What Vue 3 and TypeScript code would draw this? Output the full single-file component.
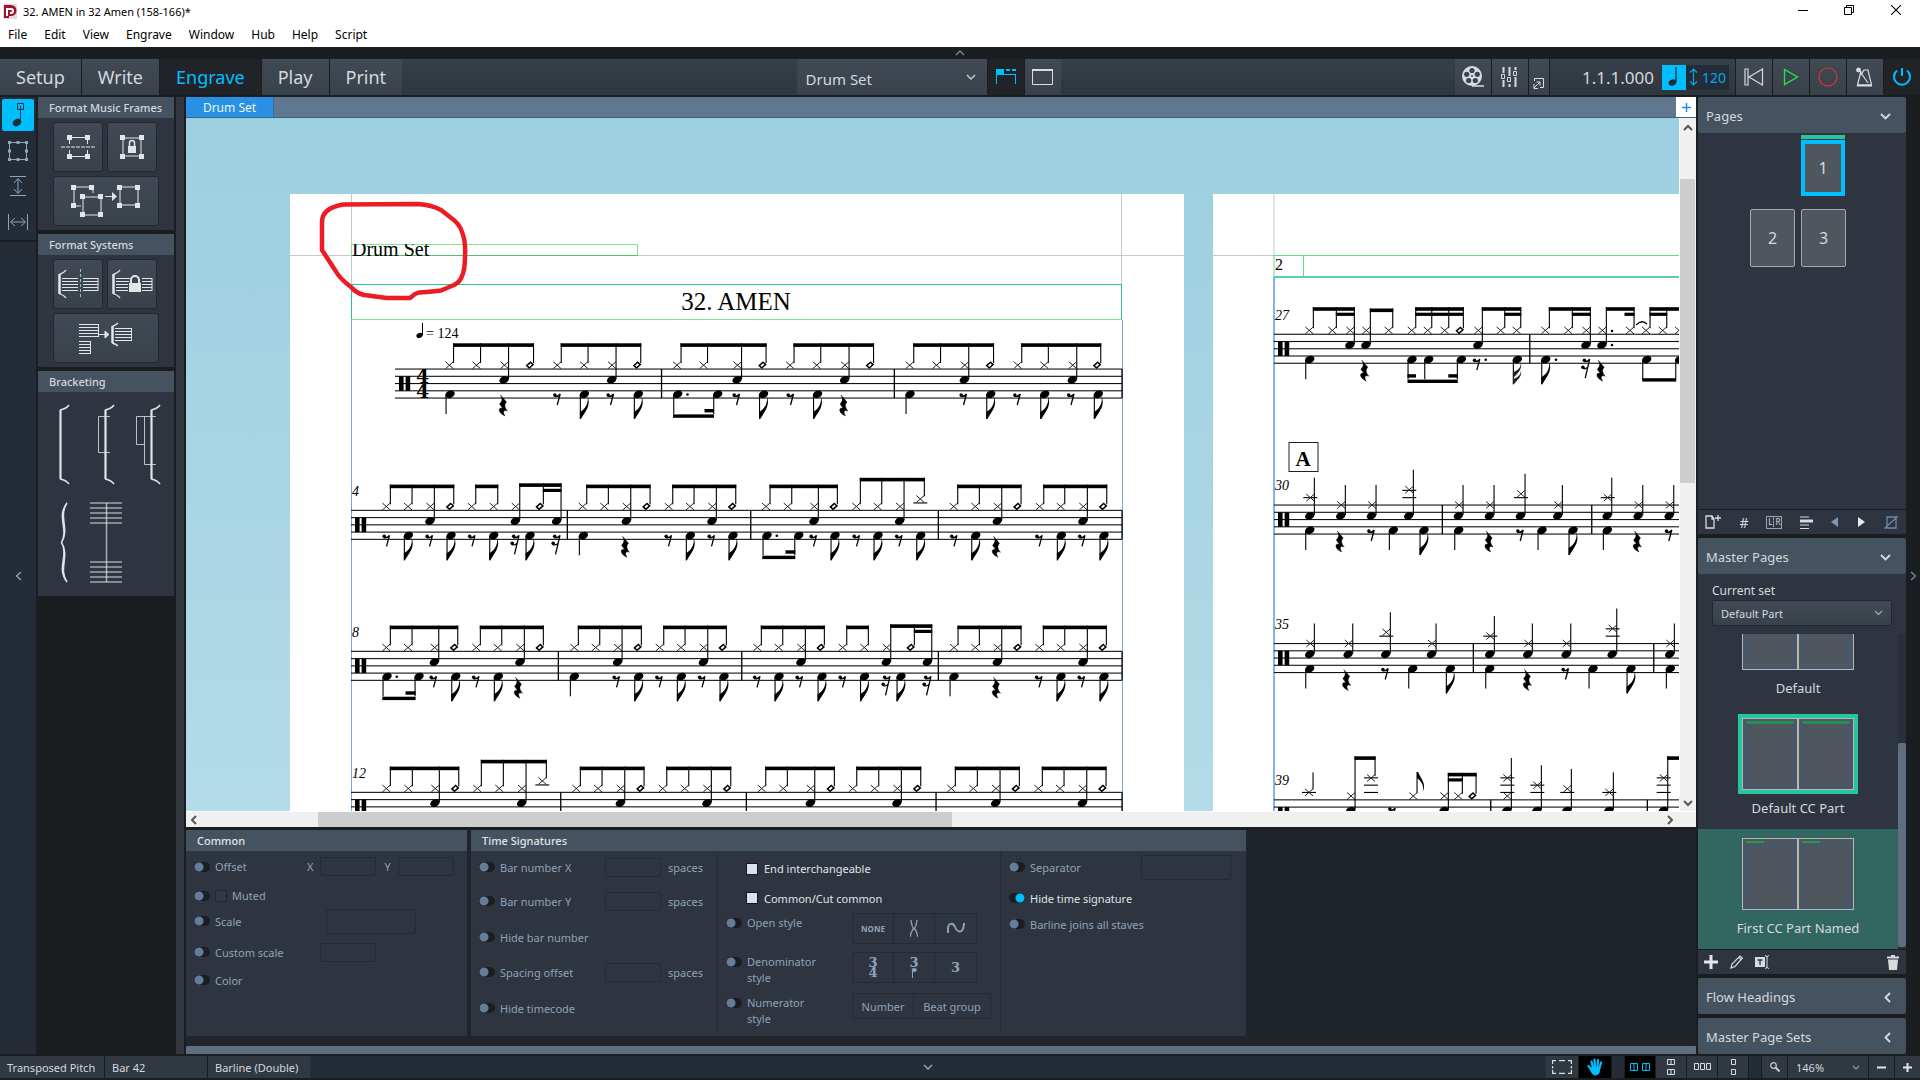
<script setup lang="ts">
import { ref } from 'vue'

interface Seg { x: number; y: number; w: number; h: number }
interface Glyph { id: string; x: number; y: number }
interface UpGroup { notes: string; beam?: number; second?: [number, number][] }
interface StaffSystem {
  x: number
  end: number
  top: number
  label?: string
  labelY?: number
  bars: number[]
  clefX: number
  up: UpGroup[]
  down: string
  downBeams?: [number, number, number][]
  singles?: [number, number, boolean][]
}

const modes = ['Setup', 'Write', 'Engrave', 'Play', 'Print']
const menus = ['File', 'Edit', 'View', 'Engrave', 'Window', 'Hub', 'Help', 'Script']
const activeMode = ref('Engrave')

const SPACE = 7.25

/* Upstem tokens: x = cymbal, s = cymbal + snare, o = open hi-hat, n = snare only, h = crash on a ledger line, c = high crash */
const systems: StaffSystem[] = [
  {
    x: 395, end: 1122, top: 369, bars: [661.5, 894.3, 1122], clefX: 399,
    up: [
      { notes: '453.5x 480.5x 508.5s 533.5o' }, { notes: '561.2x 588x 616s 640.7o' },
      { notes: '681x 707.5x 741.5s 766o' }, { notes: '794x 820.7x 849s 873.5o' },
      { notes: '913.7x 940.5x 968.7s 993.5o' }, { notes: '1021.7x 1048.3x 1076.7s 1100.7o' },
    ],
    down: '450q 503R 556.7r 584.3e 610r 638.3e 677.7d 717.7b 736r 763.5e 790r 817.5e 843.5R 910q 963r 990.7e 1016.7r 1044.7e 1070.5r 1098.3e',
    downBeams: [[673, 714, 45.4], [704.5, 714, 40]],
  },
  {
    x: 351, end: 1122, top: 510.3, label: '4', labelY: 496, bars: [567.3, 750.7, 938.3, 1122], clefX: 355,
    up: [
      { notes: '390.3x 412x 434.3s 453.7o' }, { notes: '475.7x 497.7x' },
      { notes: '519.7s 543.3o 561n', beam: -27, second: [[543.3, 561]] },
      { notes: '586.7x 608.3x 630.7s 650o' }, { notes: '672.7x 694x 716.3s 735.7o' },
      { notes: '770x 791.7x 818.3s 837.3o' }, { notes: '860.3x 881.7x 904s 924.3h', beam: -32.5 },
      { notes: '957.7x 979.3x 1001.7s 1021o' }, { notes: '1043.7x 1064.7x 1087.3s 1106.7o' },
    ],
    down: '386r 408.3e 429r 451e 471.5r 493.7e 515S 530e 556S 583.3q 625R 668r 690.3e 711r 733e 767d 798.7b 813r 835e 856r 878e 898.5r 920.7e 953.5r 975.7e 996R 1038.7r 1061.3e 1081.5r 1104e',
    downBeams: [[762.3, 795.3, 45.4], [785.5, 795.3, 40]],
  },
  {
    x: 351, end: 1122, top: 651.3, label: '8', labelY: 637, bars: [558.3, 741.7, 938.3, 1122], clefX: 355,
    up: [
      { notes: '390.3x 412x 438.7s 457.7o' }, { notes: '480.3x 501.7x 524.3s 543.3o' },
      { notes: '578.3x 599.7x 622s 641.3o' }, { notes: '663.7x 685x 707.7s 726.3o' },
      { notes: '761.3x 782.7x 805.3s 824.3o' }, { notes: '846.7x 868.3x' },
      { notes: '890.7s 914.3o 931.7n', beam: -27, second: [[914.3, 931.7]] },
      { notes: '958x 979.3x 1001.7s 1021o' }, { notes: '1043.3x 1064.7x 1087.3s 1106.3o' },
    ],
    down: '387d 419b 433r 455.7e 475.5r 498.3e 518R 574.3q 616r 638.7e 658.7r 681.3e 701.5r 724e 756.5r 779e 799r 822e 842r 864.5e 886S 901e 927S 954q 996R 1038.5r 1061e 1081r 1104e',
    downBeams: [[382.3, 415.6, 45.4], [405.5, 415.6, 40]],
  },
  {
    x: 351, end: 1122, top: 792.3, label: '12', labelY: 778, bars: [560.7, 746.3, 936, 1122], clefX: 355,
    up: [
      { notes: '390.3x 412.3x 439.3s 458.7o' }, { notes: '481.3x 503.3x 526s 546.3h', beam: -32.5 },
      { notes: '580.3x 602x 624.7s 644o' }, { notes: '666.7x 688.7x 711.3s 730.7o' },
      { notes: '765.7x 787.3x 814.7s 834.3o' }, { notes: '856.7x 878.7x 901.3s 920.7o' },
      { notes: '955.3x 977.3x 1000s 1019.3o' }, { notes: '1042.3x 1064x 1086.7s 1106o' },
    ],
    down: '',
  },
  {
    x: 1274, end: 1920, top: 334.2, label: '27', labelY: 320, bars: [1529.7], clefX: 1278,
    up: [
      { notes: '1313.3x 1336.3x 1354.3s', beam: -27, second: [[1336.3, 1354.3]] },
      { notes: '1370.3s 1392.7x' },
      { notes: '1415.7x 1431.7x 1448.7x 1463.3o', beam: -27, second: [[1415.7, 1463.3]] },
      { notes: '1482.3s 1504.7x 1520.7x', beam: -27, second: [[1504.7, 1520.7]] },
      { notes: '1549.3x 1572.3x 1590.3s', beam: -27, second: [[1572.3, 1590.3]] },
      { notes: '1606.3s 1634x', beam: -27, second: [[1625, 1634]] },
      { notes: '1650x 1666.7x 1683x', beam: -27, second: [[1650, 1666.7]] },
    ],
    down: '1309.7q 1364.3R 1412b 1428.7b 1461.3b 1476.3r 1485.7. 1517.3E 1545.7e 1556. 1585.7S 1600.7R 1646.7b 1679.7b',
    downBeams: [[1407.5, 1457.8, 45.4], [1407.5, 1416, 40], [1448.3, 1457.8, 40], [1642.2, 1676.2, 44]],
  },
  {
    x: 1274, end: 1920, top: 505, label: '30', labelY: 490, bars: [1442.3, 1591.7], clefX: 1278,
    up: [],
    singles: [
      [1314.3, -7.4, true], [1345.3, 0, true], [1376, 0, true], [1413.3, -15.3, true],
      [1463, 0, true], [1494, 0, true], [1525, -11.2, true], [1562.3, 0, true],
      [1611.7, -7.4, true], [1642.7, 0, true], [1673.7, 0, true],
    ],
    down: '1309.7q 1339.7R 1370.7r 1393.3q 1424e 1458.7q 1488.7R 1519.7r 1542q 1573e 1607.3q 1637R 1668.3r',
  },
  {
    x: 1274, end: 1920, top: 643.5, label: '35', labelY: 629, bars: [1473.3, 1653.7], clefX: 1278,
    up: [],
    singles: [
      [1314.3, 0, true], [1352.7, 0, true], [1390.3, -11.2, true], [1436, 0, true],
      [1494.3, -7.4, true], [1532.3, 0, true], [1570.7, 0, true], [1616.7, -15, true], [1674.3, 0, true],
    ],
    down: '1309.7q 1346.3R 1384.7r 1412.7q 1450.3e 1489.7q 1527R 1565r 1593q 1631e 1670.3q',
  },
  {
    x: 1274, end: 1920, top: 799.8, label: '39', labelY: 785, bars: [1490.7, 1647.3], clefX: 1278,
    up: [
      { notes: '1355s 1375c', beam: -43.5 },
      { notes: '1448.3s 1462.3x 1476o', beam: -27, second: [[1448.3, 1462.3]] },
      { notes: '1667.7t 1690c', beam: -43.5 },
    ],
    singles: [[1313, -7.4, false], [1511.3, -21.8, true], [1541.3, -14.5, true], [1571.3, -11, true], [1613.3, -7.4, true]],
    down: '',
  },
]

const segs: Seg[] = []
const staffLines: Seg[] = []
const glyphs: Glyph[] = []

const stem = (x: number, y1: number, y2: number) => segs.push({ x: x - 0.5, y: y1, w: 1.1, h: y2 - y1 })

function ledgers(x: number, top: number, dy: number) {
  for (let l = -7.4; l >= dy - 1; l -= 7.3) segs.push({ x: x - 7, y: top + l - 0.5, w: 14, h: 1.1 })
}

for (const s of systems) {
  for (let i = 0; i < 5; i++) staffLines.push({ x: s.x, y: s.top + i * SPACE - 0.5, w: s.end - s.x, h: 1.1 })
  for (const b of s.bars) segs.push({ x: b - 0.6, y: s.top, w: 1.3, h: SPACE * 4 })
  segs.push({ x: s.clefX, y: s.top + SPACE, w: 4.6, h: SPACE * 2 }, { x: s.clefX + 6.6, y: s.top + SPACE, w: 4.6, h: SPACE * 2 })

  for (const g of s.up) {
    const beam = s.top + (g.beam ?? -25.7)
    const toks = g.notes.split(' ').map(t => ({ x: parseFloat(t), k: t[t.length - 1] }))
    segs.push({ x: toks[0].x - 0.5, y: beam, w: toks[toks.length - 1].x - toks[0].x + 1, h: 3.6 })
    for (const [a, b] of g.second ?? []) segs.push({ x: a - 0.5, y: beam + 5.5, w: b - a + 1, h: 3.2 })
    for (const { x, k } of toks) {
      const hx = x - 4
      if (k === 'x' || k === 's') glyphs.push({ id: 'cross', x: hx, y: s.top - 3.8 })
      if (k === 's' || k === 'n' || k === 't') glyphs.push({ id: 'head', x: hx - 0.4, y: s.top + 10.8 })
      if (k === 'o') glyphs.push({ id: 'open', x: hx + 0.4, y: s.top - 4 })
      if (k === 'h') { glyphs.push({ id: 'cross', x: hx, y: s.top - 11.3 }); ledgers(hx, s.top, -8) }
      if (k === 'c' || k === 't') { glyphs.push({ id: 'cross', x: hx, y: s.top - 21.8 }); ledgers(hx, s.top, -22) }
      const foot = k === 's' || k === 'n' || k === 't' ? 10 : k === 'h' ? -14 : k === 'c' ? -24 : -6
      stem(x, beam, s.top + foot)
    }
  }

  for (const [x, dy, snare] of s.singles ?? []) {
    glyphs.push({ id: 'cross', x: x - 4, y: s.top + dy })
    if (snare) glyphs.push({ id: 'head', x: x - 4.6, y: s.top + 10.8 })
    ledgers(x - 4, s.top, dy)
    stem(x, s.top + dy - 20, s.top + (snare ? 10 : dy - 3))
  }

  for (const t of s.down ? s.down.split(' ') : []) {
    const x = parseFloat(t)
    const k = t[t.length - 1]
    if (k === 'R') glyphs.push({ id: 'rest4', x, y: s.top + 36.5 })
    else if (k === 'r') glyphs.push({ id: 'rest8', x, y: s.top + 30 })
    else if (k === 'S') glyphs.push({ id: 'rest16', x, y: s.top + 30 })
    else if (k === '.') glyphs.push({ id: 'dot', x, y: s.top + 25.5 })
    else {
      glyphs.push({ id: 'head', x, y: s.top + 25.3 })
      const foot = k === 'e' || k === 'E' ? 50 : 45
      stem(x - 4, s.top + 26, s.top + foot)
      if (k === 'e' || k === 'E') glyphs.push({ id: k === 'e' ? 'flag' : 'flag2', x: x - 4.4, y: s.top + 50 })
      if (k === 'd') glyphs.push({ id: 'dot', x: x + 9.8, y: s.top + 25.5 })
    }
  }
  for (const [a, b, dy] of s.downBeams ?? []) segs.push({ x: a, y: s.top + dy, w: b - a, h: 3.4 })
}

/* Free-standing items: doubled cymbal, voice with an upward flag, augmentation dots */
glyphs.push(
  { id: 'cross', x: 1507.3, y: 796 }, { id: 'cross', x: 1413.3, y: 796 }, { id: 'flagUp', x: 1417, y: 772 },
  { id: 'rest8', x: 1391.7, y: 813 }, { id: 'dot', x: 1612, y: 331 }, { id: 'dot', x: 1612, y: 345 },
)
stem(1417, 772, 793)

const commonRows = ['Offset', 'Muted', 'Scale', 'Custom scale', 'Color']
const barRows = [
  { label: 'Bar number X', unit: true }, { label: 'Bar number Y', unit: true },
  { label: 'Hide bar number', unit: false }, { label: 'Spacing offset', unit: true }, { label: 'Hide timecode', unit: false },
]
const masterPages = [
  { name: 'Default', cls: '' }, { name: 'Default CC Part', cls: 'current' }, { name: 'First CC Part Named', cls: 'selected' },
]
</script>

<template>
  <div class="app">
    <header class="titlebar">
      <svg class="logo" width="14" height="15" viewBox="0 0 14 15"><rect width="14" height="15" rx="1" fill="#e3dcdc" /><path d="M1 1h7a5 5 0 0 1 0 11H6v2H1z" fill="#a3122c" /><path d="M4 12V5h4a2 2 0 0 1 0 4H7" fill="none" stroke="#fff" stroke-width="2" /></svg>
      <span class="wtitle">32. AMEN in 32 Amen (158-166)*</span>
      <div class="winbtns">
        <button aria-label="Minimize"><svg width="10" height="10"><path d="M0 5.5h10" stroke="#000" /></svg></button>
        <button aria-label="Restore"><svg width="10" height="10" fill="none" stroke="#000"><path d="M.5 2.5h7v7h-7zM2.5 2.5V.5h7v7H8" /></svg></button>
        <button aria-label="Close"><svg width="10" height="10"><path d="M0 0l10 10M10 0L0 10" stroke="#000" stroke-width="1.1" /></svg></button>
      </div>
    </header>
    <nav class="menubar"><button v-for="m in menus" :key="m">{{ m }}</button></nav>
    <button class="strip" aria-label="Hide toolbar"><svg width="10" height="6" fill="none" stroke="#7d8b99" stroke-width="1.4"><path d="M1 5l4-4 4 4" /></svg></button>

    <div class="toolbar">
      <div class="tgroup">
        <button v-for="m in modes" :key="m" class="mode" :class="{ on: activeMode === m }" @click="activeMode = m">{{ m }}</button>
      </div>
      <div class="tgroup">
        <div class="selwrap layout">
          <select aria-label="Layout"><option>Drum Set</option></select>
          <svg width="10" height="7" fill="none" stroke="#c3c9cf" stroke-width="1.5"><path d="M1 1l4 4 4-4" /></svg>
        </div>
        <button class="tb on" aria-label="Tabs"><svg width="20" height="16"><path d="M0 0h8v5h12v1H1v9H0zM19 5h1v10h-1z" fill="#00bfff" /><path d="M10 1h4M16 1h4" stroke="#00bfff" stroke-width="2" /></svg></button>
        <button class="tb" aria-label="Window"><svg width="21" height="16" fill="none" stroke="#d8dcdf"><path d="M.5 1v14.5h20V1" /><path d="M0 1h21" stroke-width="2" /></svg></button>
      </div>
      <div class="tgroup">
        <button class="tb" aria-label="Video">
          <svg width="24" height="22" viewBox="0 0 24 22"><circle cx="11" cy="10" r="10" fill="#d8dcdf" /><g fill="#3b444e"><circle cx="11" cy="4.5" r="2.6" /><circle cx="16.3" cy="8.3" r="2.6" /><circle cx="14.3" cy="14.5" r="2.6" /><circle cx="7.7" cy="14.5" r="2.6" /><circle cx="5.7" cy="8.3" r="2.6" /><circle cx="11" cy="10" r="1" /></g><path d="M11 20h12" stroke="#d8dcdf" stroke-width="1.5" /></svg>
        </button>
        <button class="tb" aria-label="Mixer">
          <svg width="17" height="20" fill="none" stroke="#d8dcdf"><path d="M2.5 0v6M2.5 13v7M8.500 0v9M8.5 17v3M14.5 0v3M14.5 10v10" stroke-width="2" /><path d="M.5 7.5h3v4h-3zM6.500 10.5h3v4h-3zM12.5 4.5h3v4h-3z" /></svg>
        </button>
        <button class="tb small" aria-label="Transport window"><svg width="11" height="11" fill="none" stroke="#d8dcdf"><path d="M1.5 3V.5h9v9H7M1 10l6-6M1 6v4.5h4M3.5 4H7v3.5" /></svg></button>
        <div class="transport">
          <span class="time">1.1.1.000</span>
          <button class="beat" aria-label="Follow tempo"><svg width="12" height="20"><ellipse cx="4.5" cy="15.5" rx="4" ry="3" transform="rotate(-25 4.5 15.5)" fill="#1c2a36" /><path d="M8 0v15" stroke="#1c2a36" stroke-width="1.3" /></svg></button>
          <span class="tempo"><svg width="9" height="18" fill="none" stroke="#00a8e8" stroke-width="1.2"><path d="M4.5 1v16M1 4.5L4.5 1 8 4.5M1 13.5L4.5 17 8 13.5" /></svg>120</span>
        </div>
        <button class="tb" aria-label="Rewind"><svg width="20" height="18" fill="none" stroke="#d8dcdf" stroke-width="1.2"><path d="M1 1h3v16H1zM18.5 1v16L5 9z" /></svg></button>
        <button class="tb" aria-label="Play"><svg width="16" height="18" fill="none" stroke="#20e648" stroke-width="1.3"><path d="M1.5 1.5v15L14.5 9z" /></svg></button>
        <button class="tb" aria-label="Record"><svg width="20" height="20" fill="none" stroke="#e03038" stroke-width="1.2"><circle cx="10" cy="10" r="9" /></svg></button>
        <button class="tb" aria-label="Click"><svg width="18" height="20" fill="none" stroke="#d8dcdf" stroke-width="1.2"><path d="M5 4L1.5 18h14L12 3H8L5 8M3 3l9 13" /><path d="M1 18.5h15" stroke-width="2" /><circle cx="2.5" cy="3" r="1.8" fill="#d8dcdf" /></svg></button>
        <button class="tb dark" aria-label="Activate project"><svg width="20" height="20" fill="none" stroke="#00bfff" stroke-width="2"><path d="M5 3.5a8 8 0 1 0 10 0M10 1v8" /></svg></button>
      </div>
    </div>

    <main class="main">
      <aside class="rail">
        <div class="railtools">
          <button class="rt on" aria-label="Graphic editing"><svg width="12" height="24" fill="none" stroke="#16303f"><path d="M5.5.5h6v6h-6zM8.5 3v16" /><ellipse cx="5" cy="19.5" rx="4" ry="3" transform="rotate(-30 5 19.5)" fill="#16303f" /></svg></button>
          <button class="rt" aria-label="Frames"><svg width="22" height="22" fill="none" stroke="#8fa6bd"><path d="M2.5 2.5h17v17h-17z" /><path d="M1 1h3v3H1zM9.500 1h3v3h-3zM18 1h3v3h-3zM1 9.5h3v3H1zM18 9.5h3v3h-3zM1 18h3v3H1zM9.500 18h3v3h-3zM18 18h3v3h-3z" fill="#8fa6bd" stroke="none" /></svg></button>
          <button class="rt" aria-label="Staff spacing"><svg width="16" height="20" fill="none" stroke="#8fa6bd"><path d="M0 .5h16M0 19.5h16M8 3v14M4 7l4-4.5L12 7M4 13l4 4.5 4-4.5" /></svg></button>
          <button class="rt" aria-label="Note spacing"><svg width="20" height="16" fill="none" stroke="#8fa6bd"><path d="M.5 0v16M19.5 0v16M3 8h14M7 4L2.5 8 7 12M13 4l4.5 4-4.5 4" /></svg></button>
        </div>
        <button class="railtoggle" aria-label="Collapse panel"><svg width="7" height="10" fill="none" stroke="#8fa6bd" stroke-width="1.3"><path d="M6 1L1.5 5 6 9" /></svg></button>
      </aside>

      <aside class="fmt">
        <section class="card">
          <h2>Format Music Frames</h2>
          <div class="fbtns">
            <button aria-label="Insert frame break"><svg width="34" height="24" fill="none" stroke="#e2e6e9"><path d="M8.500 3v6M26.500 3v6M8.500 15v6M26.500 15v6M8 2.500h18M8 21.500h18" /><path d="M0 12h34" stroke-dasharray="4 1" /><path d="M6 0h5v5H6zM24 0h5v5h-5zM6 19h5v5H6zM24 19h5v5h-5z" fill="#e2e6e9" stroke="none" /></svg></button>
            <button aria-label="Lock frame"><svg width="24" height="24" fill="none" stroke="#e2e6e9"><path d="M3 3h18v18H3z" /><path d="M0 0h5v5H0zM19 0h5v5h-5zM0 19h5v5H0zM19 19h5v5h-5zM8 11h8v7H8z" fill="#e2e6e9" stroke="none" /><path d="M9.500 11V8a2.500 2.500 0 0 1 5 0v3" stroke-width="1.5" /></svg></button>
            <button class="wide" aria-label="Move into frame"><svg width="70" height="34" fill="none" stroke="#e2e6e9"><path d="M10 22H3V3h19v6M12 13h18v18H12zM49 3h18v18H49zM34 12.500h8" /><path d="M0 1h5v5H0zM18 1h5v5h-5zM0 19h5v5H0zM9 10h5v5H9zM27 10h5v5h-5zM9 28h5v5H9zM27 28h5v5h-5zM46 1h5v5h-5zM64 1h5v5h-5zM46 19h5v5h-5zM64 19h5v5h-5zM41 8l5 4.500-5 4.500z" fill="#e2e6e9" stroke="none" /></svg></button>
          </div>
        </section>
        <section class="card">
          <h2>Format Systems</h2>
          <div class="fbtns">
            <button aria-label="Insert system break"><svg width="42" height="32" fill="none" stroke="#e2e6e9"><path d="M2.500 6v20" stroke-width="2.5" /><path d="M2 6.500Q7 5 9 2M2 25.500Q7 27 9 30" stroke-width="1.3" /><path d="M5 10.500h16M5 13.500h16M5 16.500h16M5 19.500h16M5 22.500h16M26 10.500h15M26 13.500h15M26 16.500h15M26 19.500h15M26 22.500h15M41 10v13" /><path d="M23.500 1v30" stroke="#8fc0dc" stroke-dasharray="3 2" /></svg></button>
            <button aria-label="Lock system"><svg width="42" height="32" fill="none" stroke="#e2e6e9"><path d="M2.500 6v20" stroke-width="2.5" /><path d="M2 6.500Q7 5 9 2M2 25.500Q7 27 9 30" stroke-width="1.3" /><path d="M5 10.500h14M5 13.500h13M5 16.500h12M5 19.500h12M5 22.500h12M31 10.500h10M31 13.500h10M31 16.500h10M31 19.500h10M31 22.500h10M41 10v13" /><path d="M18 15h12v9H18z" fill="#e2e6e9" stroke="none" /><path d="M20 15v-3a4 4 0 0 1 8 0v3" stroke-width="2" /></svg></button>
            <button class="wide" aria-label="Make into system"><svg width="54" height="32" fill="none" stroke="#e2e6e9"><path d="M0 2.500h19M0 5.500h19M0 8.500h19M0 11.500h19M0 14.500h19M19.500 2v13M0 19.500h11M0 22.500h11M0 25.500h11M0 28.500h11M0 31.500h11M11.500 19v13M20 12.500h9" /><path d="M26 9l4 3.500-4 3.500z" fill="#e2e6e9" /><path d="M33.500 4v17" stroke-width="2.5" /><path d="M33 4.500Q37 3 39 1M33 21Q37 22 39 24" stroke-width="1.3" /><path d="M36 6.500h16M36 9.500h16M36 12.500h16M36 15.500h16M36 18.500h16M52.500 6v13" /></svg></button>
          </div>
        </section>
        <section class="card grow">
          <h2>Bracketing</h2>
          <svg class="brackets" width="136" height="200" viewBox="38 393 136 200" fill="none" stroke="#dfe3e6">
            <g stroke-width="2.2"><path d="M60.500 411v69M105.500 411v69M151.500 411v69" /></g>
            <path d="M60 411q6-1 9-5M60 480q6 1 9 5M105 411q6-1 9-5M105 480q6 1 9 5M151 411q6-1 9-5M151 480q6 1 9 5" stroke-width="1.6" />
            <path d="M110 417.500H98.500v36H110M156 417.500h-19.500v28h8M144.500 417.500v48H156" stroke-opacity=".8" />
            <path d="M67 504C56 518 69 530 61.500 543.500C69 557 56 569 67 583C58 570 70 557 61.500 543.500C70 530 58 518 67 504Z" fill="#dfe3e6" stroke-width="1.5" />
            <path d="M106.500 504v79" stroke-opacity=".7" stroke-width="1.5" />
            <path d="M90 504h32M90 509h32M90 514h32M90 519h32M90 524h32M90 563h32M90 568h32M90 573h32M90 578h32M90 583h32" stroke-opacity=".65" stroke-width="1.3" />
          </svg>
        </section>
      </aside>
      <div class="gutter"></div>

      <section class="center">
        <div class="tabs"><button class="tab">Drum Set</button><button class="addtab" aria-label="New tab"><svg width="9" height="9"><path d="M4.500 0v9M0 4.500h9" stroke="#1e8fe8" stroke-width="1.5" /></svg></button></div>
        <div class="viewport">
          <div class="canvas">
            <svg class="score" width="1734" height="694" viewBox="186 118 1734 694">
              <defs>
                <g id="cross"><path d="M-4-3.500L4 3.500M4-3.500L-4 3.500" stroke="#222" stroke-width="1" /></g>
                <g id="head"><ellipse rx="4.9" ry="3.6" transform="rotate(-24)" /></g>
                <g id="open"><path d="M-3.200.6L.6-2.800 3.200-.4-.6 3z" fill="none" stroke="#000" stroke-width="1.5" /></g>
                <g id="dot"><circle r="1.3" /></g>
                <g id="rest8"><circle cx="-1.8" cy="-4" r="1.8" /><path d="M-2.500-3Q1-1.500 3.500-5L.5 6" fill="none" stroke="#000" stroke-width="1.3" /></g>
                <g id="rest16"><circle cx="-1.3" cy="-4" r="1.8" /><circle cx="-2.8" cy="3" r="1.8" /><path d="M-2-3Q1.500-1.500 4-5L-.5 14M-3.500 4Q0 5.500 2 3" fill="none" stroke="#000" stroke-width="1.3" /></g>
                <g id="rest4"><path d="M-2.500-10.500L3.500-3.500C1.200-1 1.300 1.500 4.500 5.500 .5 4-.5 6.500 2 10.500-5.500 7-5 1.500-.5 2.500L-3.500-1.500C-.5-4.500-.5-7-2.500-10.500z" stroke="#000" stroke-width=".4" /></g>
                <g id="flag"><path d="M0 0V-7C4-9 9.500-15 7.500-23 11.500-14 6-8 1 0z" /></g>
                <g id="flag2"><path d="M0 0V-5C5-7 8-9 8-14 9.500-8 5-5 1 0zM0-7V-12C5-14 8-16 8-22 9.500-15 5-11 1-7z" fill="#222" /></g>
                <g id="flagUp"><path d="M0 0V6C3 8 8 13 5.500 20 10 12 4 7 1 0z" /></g>
              </defs>
              <rect x="290" y="194" width="894" height="700" fill="#fff" />
              <rect x="1213" y="194" width="894" height="700" fill="#fff" />
              <g fill="none">
                <path d="M290 255.500h894M351.500 194v90M1121.500 194v90M1213 255.500h800M1274 194v61" stroke="#c8c8c8" />
                <path d="M351.500 320v500M1122.500 320v500" stroke="#6fa8ea" />
                <path d="M1274 277v540" stroke="#84b4f0" stroke-width="2" />
                <path d="M351.500 244.500h286v11h-286z" stroke="#7be495" />
                <path d="M351.500 255.500h286" stroke="#50c070" />
                <path d="M351.500 319.500h770v-35" stroke="#7be495" />
                <path d="M351.500 319.500v-35h770v35" stroke="#30bd92" />
                <path d="M1274 255.500h700M1274 255v22.500h29.500v-22" stroke="#66dc80" />
                <path d="M1274 277h700" stroke="#5fd0a4" stroke-width="2" />
              </g>
              <svg x="351" y="244" width="287" height="12" viewBox="351 244 287 12"><text x="352" y="256" font-size="20">Drum Set</text></svg>
              <text x="736" y="310" font-size="25" text-anchor="middle">32. AMEN</text>
              <ellipse cx="419.5" cy="335.5" rx="3.2" ry="2.4" transform="rotate(-24 419.5 335.5)" />
              <path d="M422.500 323v12" stroke="#000" />
              <text x="426" y="338" font-size="14">= 124</text>
              <g class="meter"><text x="416" y="383">4</text><text x="416" y="398">4</text></g>
              <text x="1275" y="270" font-size="16">2</text>
              <rect x="1289" y="442.5" width="29" height="29" fill="none" stroke="#222" />
              <text x="1303" y="466" font-size="21" font-weight="bold" text-anchor="middle">A</text>
              <path d="M1636 325q6-6 11-1" fill="none" stroke="#000" stroke-width="1.3" />
              <template v-for="s in systems" :key="s.top">
                <text v-if="s.label" :x="s.x + 1" :y="s.labelY" font-size="14" font-style="italic">{{ s.label }}</text>
              </template>
              <rect v-for="(l, i) in staffLines" :key="'l' + i" :x="l.x" :y="l.y" :width="l.w" :height="l.h" fill="#111" />
              <rect v-for="(l, i) in segs" :key="'s' + i" :x="l.x" :y="l.y" :width="l.w" :height="l.h" />
              <use v-for="(g, i) in glyphs" :key="'g' + i" :href="'#' + g.id" :x="g.x" :y="g.y" />
              <path d="M343 204.500L418 204Q432 205 441 210L450 217Q460 224 462 232Q466 242 465 256Q465 270 462 276Q460 282 454 285L441 290.500Q428 292 419 292.500L415 294 410 298H387L364 295Q356 293 351 287Q340 279 335 270L322 250V222Q322 208 343 204.500Z" fill="none" stroke="#ed1c24" stroke-width="4.5" stroke-linejoin="round" />
            </svg>
          </div>
          <div class="vscroll"><svg width="10" height="7" fill="none" stroke="#555" stroke-width="2"><path d="M1 6l4-4 4 4" /></svg><div class="vtrack"><div class="vthumb"></div></div><svg width="10" height="7" fill="none" stroke="#555" stroke-width="2"><path d="M1 1l4 4 4-4" /></svg></div>
        </div>
        <div class="hscroll"><svg width="7" height="10" fill="none" stroke="#555" stroke-width="2"><path d="M6 1L2 5l4 4" /></svg><div class="htrack"><div class="hthumb"></div></div><svg width="7" height="10" fill="none" stroke="#555" stroke-width="2"><path d="M1 1l4 4-4 4" /></svg></div>

        <div class="props">
          <section class="pcard common">
            <h3>Common</h3>
            <div class="rows crows">
              <div v-for="r in commonRows" :key="r" class="row">
                <label class="sw"><input type="checkbox" class="toggle" /><i v-if="r === 'Muted'" class="box"></i><span>{{ r }}</span></label>
                <template v-if="r === 'Offset'">
                  <label class="xy first">X<input type="text" class="num" /></label>
                  <label class="xy">Y<input type="text" class="num" /></label>
                </template>
                <select v-if="r === 'Scale'" class="psel" aria-label="Scale"></select>
                <input v-if="r === 'Custom scale'" type="text" class="num custom" aria-label="Custom scale value" />
              </div>
            </div>
          </section>
          <section class="pcard timesig">
            <h3>Time Signatures</h3>
            <div class="cols">
              <div class="rows brows">
                <div v-for="r in barRows" :key="r.label" class="row">
                  <label class="sw"><input type="checkbox" class="toggle" /><span>{{ r.label }}</span></label>
                  <label v-if="r.unit" class="unit"><input type="text" class="num" />spaces</label>
                </div>
              </div>
              <div class="rows trows">
                <label class="row chk"><input type="checkbox" class="tick" />End interchangeable</label>
                <label class="row chk"><input type="checkbox" class="tick" />Common/Cut common</label>
                <div class="row top">
                  <label class="sw"><input type="checkbox" class="toggle" /><span>Open style</span></label>
                  <div class="seg"><button class="none">NONE</button><button aria-label="Cross"><svg width="8" height="17" fill="none" stroke="#8fa3b8" stroke-width="1.3"><path d="M1 0Q2 8 4 8.500Q6 8 7 0M0 17Q2 9 4 8.500Q6 9 8 17" /></svg></button><button aria-label="Wave"><svg width="18" height="13" fill="none" stroke="#8fa3b8" stroke-width="2"><path d="M1 11V7C1 1 6 0 8 5s8 8 9-3V1" /></svg></button></div>
                </div>
                <div class="row top">
                  <label class="sw"><input type="checkbox" class="toggle" /><span>Denominator<br />style</span></label>
                  <div class="seg music"><button><span>3</span><span>4</span></button><button><span>3</span><svg width="6" height="10"><path d="M1.500 1v9" stroke="#8fa3b8" /><ellipse cx="3.2" cy="2" rx="2.6" ry="2" fill="#8fa3b8" /></svg></button><button><span>3</span></button></div>
                </div>
                <div class="row top">
                  <label class="sw"><input type="checkbox" class="toggle" /><span>Numerator<br />style</span></label>
                  <div class="seg words"><button>Number</button><button>Beat group</button></div>
                </div>
              </div>
              <div class="rows srows">
                <div class="row"><label class="sw"><input type="checkbox" class="toggle" /><span>Separator</span></label><select class="psel sep" aria-label="Separator"></select></div>
                <div class="row"><label class="sw lit"><input type="checkbox" class="toggle" checked /><span>Hide time signature</span></label></div>
                <div class="row"><label class="sw"><input type="checkbox" class="toggle" /><span>Barline joins all staves</span></label></div>
              </div>
            </div>
          </section>
        </div>
        <div class="pscroll"></div>
      </section>

      <aside class="right">
        <button class="hd">Pages<svg width="11" height="7" fill="none" stroke="#d8dcdf" stroke-width="1.8"><path d="M1 1l4.500 4.500L10 1" /></svg></button>
        <div class="pages">
          <button class="pg one">1</button>
          <button class="pg">2</button><button class="pg">3</button>
        </div>
        <div class="ptools">
          <button aria-label="Insert pages"><svg width="17" height="14" fill="none" stroke="#d8dcdf" stroke-width="1.3"><path d="M7 1H1v12h8V4zM7 1v3h2M13 0v6M10 3h6" /></svg></button>
          <button class="hash" aria-label="Page number">#</button>
          <button class="lr" aria-label="Assign master page"><span>L</span><span>R</span></button>
          <button aria-label="Start new page numbering"><svg width="13" height="13" stroke="#d8dcdf"><path d="M0 1h9M0 9h9M0 12.500h9" /><path d="M0 5h13" stroke-width="3" /></svg></button>
          <button class="arrow" aria-label="Previous"><svg width="7" height="10"><path d="M7 0v10L0 5z" fill="#7d98b4" /></svg></button>
          <button class="arrow" aria-label="Next"><svg width="7" height="10"><path d="M0 0v10l7-5z" fill="#e6eaed" /></svg></button>
          <button aria-label="Remove overrides"><svg width="15" height="13" fill="none" stroke="#7089a2" stroke-width="1.3"><path d="M3 1h9v11H3zM0 13L14 0" /></svg></button>
        </div>
        <button class="hd mp">Master Pages<svg width="11" height="7" fill="none" stroke="#d8dcdf" stroke-width="1.8"><path d="M1 1l4.500 4.500L10 1" /></svg></button>
        <div class="mset">
          <label for="mset">Current set</label>
          <div class="selwrap set"><select id="mset"><option>Default Part</option></select><svg width="9" height="6" fill="none" stroke="#a5adb5" stroke-width="1.2"><path d="M1 1l3.500 3.500L8 1" /></svg></div>
        </div>
        <div class="mlistwrap">
          <div class="mlist">
            <button v-for="m in masterPages" :key="m.name" class="mitem" :class="m.cls">
              <span class="spread"><i></i><i></i></span>{{ m.name }}
            </button>
          </div>
          <div class="mscroll"><div></div></div>
        </div>
        <div class="mtools">
          <button aria-label="Add"><svg width="14" height="14"><path d="M7 0v14M0 7h14" stroke="#e2e6e9" stroke-width="3" /></svg></button>
          <button aria-label="Edit"><svg width="13" height="14" fill="none" stroke="#d8dcdf" stroke-width="1.2"><path d="M1 13l1-4L10 1l2.500 2L5 11.500zM9 2.500L11.500 5" /></svg></button>
          <button aria-label="Rename"><svg width="14" height="14" fill="none"><path d="M0 2h10v10H0z" fill="#d8dcdf" /><path d="M2.500 5h5M5 5v5" stroke="#2e3540" stroke-width="1.3" /><path d="M10 .5q2 0 2 2v9q0 2-2 2M14 .5q-2 0-2 2M12 11.500q0 2 2 2" stroke="#d8dcdf" /></svg></button>
          <span class="fill"></span>
          <button aria-label="Delete"><svg width="12" height="15" fill="#d8dcdf"><path d="M0 1.500h4V0h4v1.500h4v2H0zM1 4.500h10L10 15H2z" /></svg></button>
        </div>
        <button class="hd gap">Flow Headings<svg width="7" height="11" fill="none" stroke="#d8dcdf" stroke-width="1.8"><path d="M6 1L1.500 5.500 6 10" /></svg></button>
        <button class="hd gap">Master Page Sets<svg width="7" height="11" fill="none" stroke="#d8dcdf" stroke-width="1.8"><path d="M6 1L1.500 5.500 6 10" /></svg></button>
      </aside>
      <button class="rstrip" aria-label="Collapse right panel"><svg width="7" height="10" fill="none" stroke="#7d8b99" stroke-width="1.3"><path d="M1 1l4.500 4L1 9" /></svg></button>
    </main>

    <footer class="status">
      <div class="sgroup"><span class="cell a">Transposed Pitch</span><span class="cell b">Bar 42</span><span class="cell b">Barline (Double)</span></div>
      <button class="stoggle" aria-label="Hide properties"><svg width="10" height="6" fill="none" stroke="#8fa6bd" stroke-width="1.5"><path d="M1 1l4 4 4-4" /></svg></button>
      <div class="sgroup">
        <button class="sb w32" aria-label="Marquee"><svg width="20" height="14" fill="none" stroke="#d8dcdf" stroke-width="1.2"><path d="M.6 4V.6H4M7 .6h6M16 .6h3.400V4M19.400 6v2.500M19.400 10v3.400H16M13 13.400H7M4 13.400H.6V10M.6 8.500V6" /></svg></button>
        <button class="sb w32 blk" aria-label="Hand"><svg width="16" height="18" fill="none" stroke="#00bfff" stroke-width="2.2" stroke-linecap="round"><path d="M4.500 3.500L6 10M7.500 1.500L8 9M11 2L10.500 9M14 4.500L12.500 10M1.500 8L5 12.500" /><path d="M5 9.500h8L12 15q-1 2-3.500 2T5 15L3.500 12z" fill="#00bfff" stroke-width="1" /></svg></button>
        <span class="gapcell"></span>
        <button class="sb w30 blk" aria-label="Spreads horizontally"><svg width="20" height="8" fill="none" stroke="#00bfff"><path d="M.5.5h7v7h-7zM4 0v8M12.500.5h7v7h-7zM16 0v8" /></svg></button>
        <button class="sb w30" aria-label="Spreads vertically"><svg width="8" height="16" fill="none" stroke="#d8dcdf"><path d="M.5.5h7v5h-7zM4 0v6M.5 10.500h7v5h-7zM4 10v6" /></svg></button>
        <button class="sb w30" aria-label="Pages horizontally"><svg width="17" height="8" fill="none" stroke="#d8dcdf"><path d="M.5.5h4v6h-4zM6.500.5h4v6h-4zM12.500.5h4v6h-4z" /></svg></button>
        <button class="sb w30" aria-label="Pages vertically"><svg width="5" height="16" fill="none" stroke="#d8dcdf"><path d="M.5.5h4v5h-4zM.5 10.500h4v5h-4z" /></svg></button>
        <span class="gapcell"></span>
        <button class="sb w25" aria-label="Zoom"><svg width="10" height="10" fill="none" stroke="#c9ced2" stroke-width="1.2"><circle cx="3.5" cy="3.5" r="2.8" /><path d="M5.500 5.500L9.500 9.500" stroke-width="2" /></svg></button>
        <div class="selwrap zoom"><select aria-label="Zoom level"><option>146%</option></select><svg width="8" height="5" fill="none" stroke="#8d98a3" stroke-width="1.2"><path d="M1 1l3 3 3-3" /></svg></div>
        <button class="sb w25" aria-label="Zoom out"><svg width="9" height="9"><path d="M0 4.500h9" stroke="#e2e6e9" stroke-width="2" /></svg></button>
        <button class="sb w25" aria-label="Zoom in"><svg width="9" height="9"><path d="M0 4.500h9M4.500 0v9" stroke="#e2e6e9" stroke-width="2" /></svg></button>
      </div>
    </footer>
  </div>
</template>

<style>
html, body { background: #1a1e21; }
body { overflow: hidden; }
</style>

<style scoped>
* { box-sizing: border-box; }
.app { display: flex; flex-direction: column; height: 100vh; font-family: "Noto Sans", "Open Sans", sans-serif; font-size: 12px; color: #d5d9dd; background: #1a1e21; overflow: hidden; }
button, select, input { font: inherit; color: inherit; margin: 0; padding: 0; border: 0; background: none; border-radius: 0; }
button { display: flex; align-items: center; justify-content: center; }
select { appearance: none; outline: 0; }
svg { display: block; flex: none; }
h2, h3 { margin: 0; font-size: 12px; font-weight: 500; }

.titlebar { display: flex; align-items: center; height: 24px; flex: none; background: #fff; color: #000; padding: 0 0 2px 3px; gap: 6px; font-size: 11px; }
.winbtns { margin-left: auto; display: flex; align-self: flex-start; }
.winbtns button { width: 46px; height: 20px; }
.winbtns button:last-child { width: 48px; }
.menubar { display: flex; height: 23px; flex: none; background: #fff; color: #000; font-size: 12px; gap: 1px; }
.menubar button { padding: 0 8px 2px; }
.strip { height: 12px; flex: none; width: 100%; }

.toolbar { display: flex; justify-content: space-between; height: 36px; flex: none; margin-bottom: 2px; background: linear-gradient(#373f49, #2e3640); }
.tgroup { display: flex; gap: 1px; background: #1a1e21; }
.mode { font-size: 18px; padding: 0 16px; background: linear-gradient(#414a54, #39414b); }
.mode.on, .tb.on, .tb.dark { background: #202428; }
.mode.on { color: #00bfff; }
.tb { width: 36px; background: linear-gradient(#414a54, #39414b); }
.tb.small { width: 20px; padding-top: 12px; }
.selwrap { position: relative; display: flex; align-items: center; background: linear-gradient(#414a54, #39414b); }
.selwrap select { width: 100%; height: 100%; }
.selwrap svg { position: absolute; right: 11px; pointer-events: none; }
.layout { width: 190px; font-size: 15px; }
.layout select { padding: 3px 0 0 9px; }
.transport { width: 185px; display: flex; align-items: center; justify-content: flex-end; padding-right: 6px; background: linear-gradient(#373f49, #2e3640); }
.time { font-size: 17px; margin-right: 8px; padding-top: 1px; }
.beat { width: 24px; height: 25px; background: #00bfff; }
.tempo { display: flex; align-items: center; gap: 4px; height: 25px; width: 43px; padding-left: 3px; background: #242d37; color: #00a8e8; font-size: 14px; }

.main { flex: 1; min-height: 0; display: flex; }
.rail { width: 36px; background: #242d37; display: flex; flex-direction: column; margin-right: 2px; position: relative; }
.railtools { padding: 2px; border-bottom: 2px solid #1a1e21; height: 145px; display: flex; flex-direction: column; gap: 4px; }
.rt { height: 32px; border-radius: 2px; }
.rt.on { background: #00bfff; }
.railtoggle { position: absolute; top: 467px; left: 0; width: 36px; height: 24px; }
.fmt { width: 136px; display: flex; flex-direction: column; gap: 4px; }
.card { background: #2e3440; height: 133px; }
.card.grow { height: 225px; }
.card h2 { height: 21px; line-height: 21px; background: #455361; padding-left: 11px; white-space: nowrap; font-size: 11px; }
.fbtns { display: flex; flex-wrap: wrap; gap: 4px; padding: 4px 15px; }
.fbtns button { width: 50px; height: 50px; background: linear-gradient(#414a54, #39414b); border: 1px solid #23282f; border-radius: 3px; }
.fbtns .wide { width: 106px; }
.gutter { width: 12px; background: #32373f; border: solid #1a1e21; border-width: 0 2px; }

.center { flex: 1; min-width: 0; display: flex; flex-direction: column; background: #20242b; }
.tabs { height: 21px; flex: none; display: flex; justify-content: space-between; background: #5f788f; border-bottom: 1px solid #3c6080; }
.tab { width: 88px; background: #2891e4; color: #eef4f8; border-right: 1px solid #3f6c94; }
.addtab { width: 20px; background: #fff; }
.viewport { flex: 1; min-height: 0; display: flex; }
.canvas { flex: 1; min-width: 0; overflow: hidden; background: linear-gradient(#9ccfe0, #b3dbe8); border-right: 1px solid #fff; }
.score text { font-family: "Liberation Serif", serif; }
.score .meter text { font: bold 19px "DejaVu Serif", serif; }
.vscroll { width: 16px; background: #f0f0f0; display: flex; flex-direction: column; align-items: center; padding: 6px 0 4px; }
.vtrack { flex: 1; width: 100%; padding: 48px 1px 0 0; }
.vthumb { height: 49%; background: #cdcdcd; }
.hscroll { height: 16px; flex: none; background: #f0f0f0; border-top: 1px solid #fff; display: flex; align-items: center; padding: 0 22px 0 4px; }
.htrack { flex: 1; height: 15px; padding-left: 121px; }
.hthumb { height: 15px; width: 47%; background: #cdcdcd; }

.props { height: 219px; flex: none; display: flex; gap: 4px; border-top: 3px solid #1a1e21; color: #8fa3b8; }
.pcard { height: 206px; background: #2e3440; border-radius: 2px; }
.pcard h3 { height: 21px; line-height: 21px; background: #455361; color: #e0e4e7; padding-left: 11px; font-size: 11px; }
.common { width: 281px; }
.timesig { width: 775px; }
.cols { display: flex; padding-top: 2px; }
.rows { display: grid; align-content: start; padding-left: 8px; font-size: 11px; }
.row { display: flex; align-items: center; }
.crows { grid-template-rows: 31px 27px 24px 38px 18px; }
.sw { display: flex; align-items: center; gap: 5px; white-space: nowrap; }
.toggle { appearance: none; width: 16px; height: 10px; border-radius: 5px; background: radial-gradient(circle at 5px 5px, #667d99 4px, #1a1e21 5px); flex: none; }
.toggle:checked { background: radial-gradient(circle at 11px 5px, #00bfff 4px, #1a1e21 5px); }
.lit { color: #e0e4e7; }
.box { width: 12px; height: 12px; border: 1px solid #22272e; background: #303a45; }
.num { width: 56px; height: 19px; border: 1px solid #252b35; border-radius: 2px; }
.psel { width: 90px; height: 25px; border: 1px solid #252b35; border-radius: 2px; }
.common .sw { width: 113px; }
.common .psel { margin-left: 19px; }
.common .custom { margin-left: 13px; }
.xy { display: flex; align-items: center; gap: 7px; margin-left: 8px; }
.xy.first { margin-left: 0; }
.brows { width: 247px; grid-template-rows: 28px 40px 32px 38px 34px; border-right: 1px solid #252b35; height: 178px; }
.brows .sw { width: 126px; }
.unit { display: flex; align-items: center; gap: 7px; }
.trows { width: 283px; grid-template-rows: 31px 28px 39px 41px 36px; border-right: 1px solid #252b35; height: 178px; }
.chk { color: #e0e4e7; gap: 6px; padding-left: 20px; }
.tick { appearance: none; width: 12px; height: 12px; background: #d9e1ea; border: 1px solid #16191d; }
.trows .sw { width: 126px; align-items: flex-start; line-height: 16px; padding-top: 2px; }
.trows .toggle { margin-top: 3px; }
.trows .top { align-items: flex-start; padding-top: 1px; }
.seg { display: flex; border: 1px solid #252b35; border-radius: 2px; }
.seg button { width: 41px; height: 29px; border-right: 1px solid #252b35; }
.seg button:last-child { border-right: 0; }
.seg .none { font-size: 8px; font-weight: 700; }
.music button { flex-direction: column; font: bold 13px/10px "DejaVu Serif", serif; }
.words button { width: 61px; height: 24px; }
.words button:last-child { width: 76px; }
.srows { grid-template-rows: 28px 34px 18px; }
.srows .sw { width: 132px; }
.pscroll { height: 8px; flex: none; background: #5f6e80; border-radius: 1px; }

.right { width: 208px; margin-left: 2px; display: flex; flex-direction: column; font-size: 13px; }
.hd { height: 36px; flex: none; background: #455361; justify-content: space-between; padding: 2px 15px 0 8px; border-radius: 2px; font-size: 13px; }
.hd.gap { margin-top: 4px; }
.mp { margin-top: 4px; }
.pages { flex: 1; min-height: 0; background: #2e3440; display: grid; grid-template-columns: 45px 45px; grid-auto-rows: 58px; gap: 14px 6px; align-content: start; padding: 4px 0 0 52px; }
.pg { width: 45px; height: 58px; background: #4f565e; border: 1px solid #a5a9ad; border-radius: 2px; font-size: 16px; }
.pg.one { grid-column: 2; border: 4px solid #00bfff; width: 44px; height: 56px; margin-top: 3px; border-radius: 0; box-shadow: 0 -1px #2e3440, 0 -5px #27c59b; }
.ptools { height: 25px; flex: none; background: #2e3440; display: flex; align-items: center; justify-content: space-between; padding: 0 7px; border-top: 1px solid #1a1e21; }
.hash { font-size: 14px; width: 10px; }
.arrow { width: 10px; }
.lr { font-size: 8px; line-height: 10px; border: 1px solid #9aa2aa; height: 13px; }
.lr span { padding: 0 1px; }
.lr span + span { border-left: 1px dashed #9aa2aa; }
.mset { background: #2e3440; padding: 8px 14px 8px; display: flex; flex-direction: column; }
.mset label { line-height: 18px; font-size: 12px; }
.set { height: 26px; border: 1px solid #22272e; border-radius: 2px; font-size: 11px; }
.set select { padding-left: 8px; }
.set svg { right: 8px; }
.mlistwrap { height: 315px; flex: none; display: flex; background: #2e3440; }
.mlist { flex: 1; overflow: hidden; display: flex; flex-direction: column; justify-content: flex-end; }
.mitem { height: 120px; flex: none; flex-direction: column; justify-content: flex-start; padding-top: 5px; font-size: 13px; line-height: 18px; }
.mitem.selected { background: #31675f; }
.spread { display: flex; margin-bottom: 5px; border: 4px solid transparent; height: 80px; width: 120px; }
.current .spread { border-color: #27c59b; }
.spread i { flex: 1; border: 1px solid #b4b8bc; position: relative; background: #4f565e; }
.spread i::after { content: ""; position: absolute; inset: 5px 3px 2px; border: 1px solid #36598c; }
.current i::after { border-top: 3px solid #24905c; inset: 2px 3px 2px; }
.selected i::before { content: ""; position: absolute; left: 3px; top: 2px; width: 18px; height: 2px; background: #20a043; }
.mscroll { width: 8px; background: #292e38; padding-top: 109px; }
.mscroll div { height: 204px; background: #5f6e80; border-radius: 2px; }
.mtools { height: 25px; flex: none; background: #2e3440; border-top: 1px solid #1a1e21; display: flex; align-items: center; gap: 12px; padding: 0 7px 0 6px; }
.fill { flex: 1; }
.rstrip { width: 14px; }

.status { height: 26px; flex: none; display: flex; justify-content: space-between; border: solid #1a1e21; border-width: 2px 0; background: #242d37; font-size: 11px; position: relative; }
.sgroup { display: flex; gap: 1px; background: #1a1e21; }
.cell { background: #303841; line-height: 24px; padding-left: 7px; white-space: nowrap; }
.cell.a { width: 104px; }
.cell.b { width: 102px; }
.stoggle { position: absolute; left: 50%; top: 0; width: 30px; height: 22px; margin-left: -47px; }
.sb { background: #303841; }
.sb.blk { background: #000; }
.w32 { width: 32px; }
.w30 { width: 30px; }
.w25 { width: 25px; }
.gapcell { width: 12px; background: #242d37; }
.zoom { width: 80px; background: #303841; }
.zoom select { padding-left: 8px; }
.zoom svg { right: 8px; }
</style>
